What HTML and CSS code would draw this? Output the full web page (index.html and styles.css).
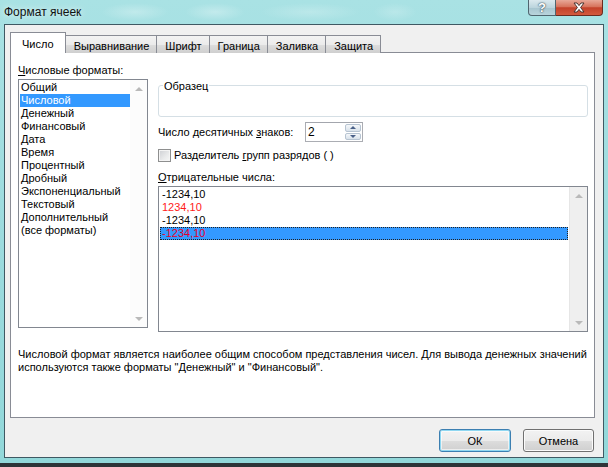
FILE: index.html
```html
<!DOCTYPE html>
<html lang="ru">

<head>
    <meta charset="UTF-8">
    <title>Формат ячеек</title>
    <link rel="stylesheet" href="styles.css">
</head>

<body>
    <div class="window">
        <div class="titlebar">
            <span class="title">Формат ячеек</span>
            <div class="caption-btns">
                <span class="cap help">?</span>
                <span class="cap close">
                    <svg width="14" height="11" viewBox="0 0 14 11">
                        <path d="M2 1 L5 1 L7 3.6 L9 1 L12 1 L8.6 5.5 L12 10 L9 10 L7 7.4 L5 10 L2 10 L5.4 5.5 Z"
                            fill="#fff" stroke="#4a3530" stroke-width="1" stroke-linejoin="round" />
                    </svg>
                </span>
            </div>
        </div>

        <div class="client">
            <div class="tabs">
                <div class="tab active">Число</div>
                <div class="tab">Выравнивание</div>
                <div class="tab">Шрифт</div>
                <div class="tab">Граница</div>
                <div class="tab">Заливка</div>
                <div class="tab">Защита</div>
            </div>

            <div class="panel">
                <div class="top-row">
                    <div class="left-col">
                        <div class="label"><u>Ч</u>исловые форматы:</div>
                        <div class="listbox formats">
                            <ul class="items">
                                <li>Общий</li>
                                <li class="selected">Числовой</li>
                                <li>Денежный</li>
                                <li>Финансовый</li>
                                <li>Дата</li>
                                <li>Время</li>
                                <li>Процентный</li>
                                <li>Дробный</li>
                                <li>Экспоненциальный</li>
                                <li>Текстовый</li>
                                <li>Дополнительный</li>
                                <li>(все форматы)</li>
                            </ul>
                            <div class="vscroll light">
                                <span class="arrow up"></span>
                                <span class="arrow down"></span>
                            </div>
                        </div>
                    </div>

                    <div class="right-col">
                        <div class="sample">
                            <span class="sample-label">Образец</span>
                        </div>

                        <div class="decimals">
                            <span class="decimals-label">Число десятичных <u>з</u>наков:</span>
                            <div class="spin">
                                <span class="spin-value">2</span>
                                <div class="spin-btns">
                                    <span class="spin-btn"><i class="tri-up"></i></span>
                                    <span class="spin-btn"><i class="tri-down"></i></span>
                                </div>
                            </div>
                        </div>

                        <div class="check-row">
                            <span class="checkbox"></span>
                            <span>Разделитель <u>г</u>рупп разрядов ( )</span>
                        </div>

                        <div class="label neg-label"><u>О</u>трицательные числа:</div>
                        <div class="listbox negatives">
                            <ul class="items">
                                <li>-1234,10</li>
                                <li class="red">1234,10</li>
                                <li>-1234,10</li>
                                <li class="red selected focused">-1234,10</li>
                            </ul>
                            <div class="vscroll">
                                <span class="arrow up"></span>
                                <span class="arrow down"></span>
                            </div>
                        </div>
                    </div>
                </div>

                <p class="description">
                    Числовой формат является наиболее общим способом представления чисел. Для вывода денежных значений<br>
                    используются также форматы "Денежный" и "Финансовый".
                </p>
            </div>

            <div class="buttons">
                <button class="btn default">ОК</button>
                <button class="btn">Отмена</button>
            </div>
        </div>
    </div>
</body>

</html>
```

FILE: styles.css
```css
body {
    margin: 0;
    padding: 0;
    width: 608px;
    height: 467px;
    overflow: hidden;
    background-color: #2e3438;
    font-family: "Liberation Sans", Arial, sans-serif;
    font-size: 11px;
    color: #000;
}

u {
    text-decoration: underline;
    text-underline-offset: 1px;
}

/* aero glass frame */
.window {
    height: 463px;
    box-sizing: border-box;
    padding: 0 4px 5px 4px;
    display: flex;
    flex-direction: column;
    background:
        radial-gradient(ellipse 34px 9px at 135px 12px, rgba(255, 255, 255, 0.28), transparent),
        radial-gradient(ellipse 30px 9px at 215px 12px, rgba(255, 255, 255, 0.3), transparent),
        radial-gradient(ellipse 50px 9px at 310px 12px, rgba(255, 255, 255, 0.22), transparent),
        radial-gradient(ellipse 22px 9px at 395px 12px, rgba(255, 255, 255, 0.2), transparent),
        linear-gradient(180deg, #a9e2e4 0%, #9adadd 60%, #92d8da 100%);
}

.titlebar {
    height: 24px;
    display: flex;
    justify-content: space-between;
    align-items: flex-start;
}

.title {
    margin-top: 5px;
    font-size: 12px;
    line-height: 14px;
    color: #111;
    text-shadow: 0 0 6px rgba(255, 255, 255, 0.9);
}

.caption-btns {
    display: flex;
    margin-right: 1px;
}

.cap {
    height: 16px;
    box-sizing: border-box;
    display: flex;
    align-items: center;
    justify-content: center;
    border: 1px solid #50656f;
    border-top: none;
}

.help {
    width: 28px;
    border-radius: 0 0 0 4px;
    background: linear-gradient(180deg, #dbe9ee 0%, #bcd5dd 50%, #a6c5cf 51%, #b9d4dc 100%);
    color: #fff;
    font-weight: bold;
    font-size: 13px;
    text-shadow: 0 0 2px #2f4450, 0 0 1px #2f4450;
}

.close {
    width: 47px;
    border-left: none;
    border-color: #6b2b20;
    border-radius: 0 0 4px 0;
    background: linear-gradient(180deg, #e8a898 0%, #d7735c 45%, #c3412a 52%, #d35a3e 100%);
}

/* client area */
.client {
    height: 434px;
    box-sizing: border-box;
    border: 1px solid #3f5963;
    background-color: #f0f0f0;
    padding: 7px 8px 0 5px;
}

.tabs {
    display: flex;
    align-items: flex-end;
    height: 21px;
}

.tab {
    height: 18px;
    box-sizing: border-box;
    padding: 4px 7px 0 8px;
    line-height: 13px;
    border: 1px solid #898c95;
    border-bottom: none;
    margin-left: -1px;
    background: linear-gradient(180deg, #f3f3f3 0%, #ebebeb 50%, #dddddd 51%, #cfcfcf 100%);
}

.tab.active {
    position: relative;
    z-index: 1;
    height: 21px;
    margin-left: 0;
    padding: 5px 11px 0 11px;
    background: #fff;
}

.panel {
    margin-top: -1px;
    height: 366px;
    box-sizing: border-box;
    border: 1px solid #898c95;
    background-color: #fff;
    padding: 11px 6px 0 7px;
}

.top-row {
    display: flex;
    gap: 10px;
}

.left-col {
    width: 130px;
}

.label {
    line-height: 13px;
    margin-bottom: 2px;
}

.listbox {
    display: flex;
    box-sizing: border-box;
    border: 1px solid #828790;
    background-color: #fff;
}

.listbox .items {
    flex: 1;
    list-style: none;
    margin: 0;
    padding: 1px 0 0 0;
}

.listbox li {
    height: 13px;
    line-height: 13px;
    padding-left: 2px;
    white-space: nowrap;
}

.formats {
    height: 249px;
}

.formats li {
    margin-left: 1px;
    padding-left: 1px;
}

.listbox li.selected {
    background-color: #3399ff;
    color: #fff;
}

.listbox li.red {
    color: #ff1a1a;
}

.listbox li.selected.red {
    color: #e8002a;
}

.listbox li.focused {
    outline: 1px dotted #222;
    outline-offset: -1px;
}

.vscroll {
    width: 17px;
    display: flex;
    flex-direction: column;
    justify-content: space-between;
    background-color: #efefef;
    border-left: 1px solid #e6e6e6;
}

.vscroll.light {
    background-color: #fcfcfc;
    border-left: none;
}

.arrow {
    height: 17px;
    display: flex;
    align-items: center;
    justify-content: center;
}

.arrow::after {
    content: "";
    width: 0;
    height: 0;
    border-left: 4px solid transparent;
    border-right: 4px solid transparent;
}

.arrow.up::after {
    border-bottom: 4px solid #b9b9b9;
}

.arrow.down::after {
    border-top: 4px solid #b9b9b9;
}

.right-col {
    flex: 1;
    padding-top: 21px;
}

.sample {
    height: 32px;
    box-sizing: border-box;
    border: 1px solid #d5dfe5;
    border-radius: 3px;
}

.sample-label {
    display: inline-block;
    margin: -6px 0 0 4px;
    padding: 0 1px;
    line-height: 13px;
    background-color: #fff;
    vertical-align: top;
}

.decimals {
    margin-top: 5px;
    height: 20px;
    display: flex;
    align-items: center;
}

.decimals-label {
    width: 147px;
}

.spin {
    width: 58px;
    height: 20px;
    box-sizing: border-box;
    display: flex;
    justify-content: space-between;
    border: 1px solid #abadb3;
    border-top-color: #a3a6ad;
}

.spin-value {
    padding-left: 2px;
    line-height: 18px;
    font-size: 12px;
}

.spin-btns {
    width: 16px;
    display: flex;
    flex-direction: column;
    gap: 1px;
    padding: 1px 1px 1px 0;
}

.spin-btn {
    flex: 1;
    display: flex;
    align-items: center;
    justify-content: center;
    border: 1px solid #b7c4d2;
    border-radius: 2px;
    background: linear-gradient(180deg, #f6f8fa 0%, #e6ecf2 50%, #d9e2ea 100%);
}

.tri-up,
.tri-down {
    width: 0;
    height: 0;
    border-left: 3px solid transparent;
    border-right: 3px solid transparent;
}

.tri-up {
    border-bottom: 3px solid #4a6088;
}

.tri-down {
    border-top: 3px solid #4a6088;
}

.check-row {
    margin-top: 7px;
    height: 13px;
    display: flex;
    align-items: center;
    gap: 3px;
    line-height: 13px;
}

.checkbox {
    width: 13px;
    height: 13px;
    box-sizing: border-box;
    border: 1px solid #8e8f8f;
    background: linear-gradient(135deg, #cdcfd3 0%, #e9eaeb 60%, #f7f7f7 100%);
    box-shadow: inset 0 0 0 1px #f4f4f4;
}

.neg-label {
    margin-top: 9px;
}

.negatives {
    height: 146px;
}

.negatives .items {
    padding: 1px 1px 0 1px;
}

.description {
    margin: 16px 0 0 0;
    line-height: 13px;
    white-space: nowrap;
}

.buttons {
    margin-top: 11px;
    display: flex;
    justify-content: flex-end;
    gap: 12px;
    padding-right: 1px;
}

.btn {
    width: 71px;
    height: 23px;
    padding: 0;
    font-family: "Liberation Sans", Arial, sans-serif;
    font-size: 11px;
    color: #000;
    border: 1px solid #707070;
    border-radius: 3px;
    background: linear-gradient(180deg, #f2f2f2 0%, #ebebeb 50%, #dddddd 51%, #cfcfcf 100%);
    box-shadow: inset 0 0 0 1px #fbfbfb;
}

.btn.default {
    width: 72px;
    border-color: #3c7fb1;
    box-shadow: inset 0 0 0 1px #8fd7f1, inset 0 0 0 2px rgba(255, 255, 255, 0.6);
}
```
